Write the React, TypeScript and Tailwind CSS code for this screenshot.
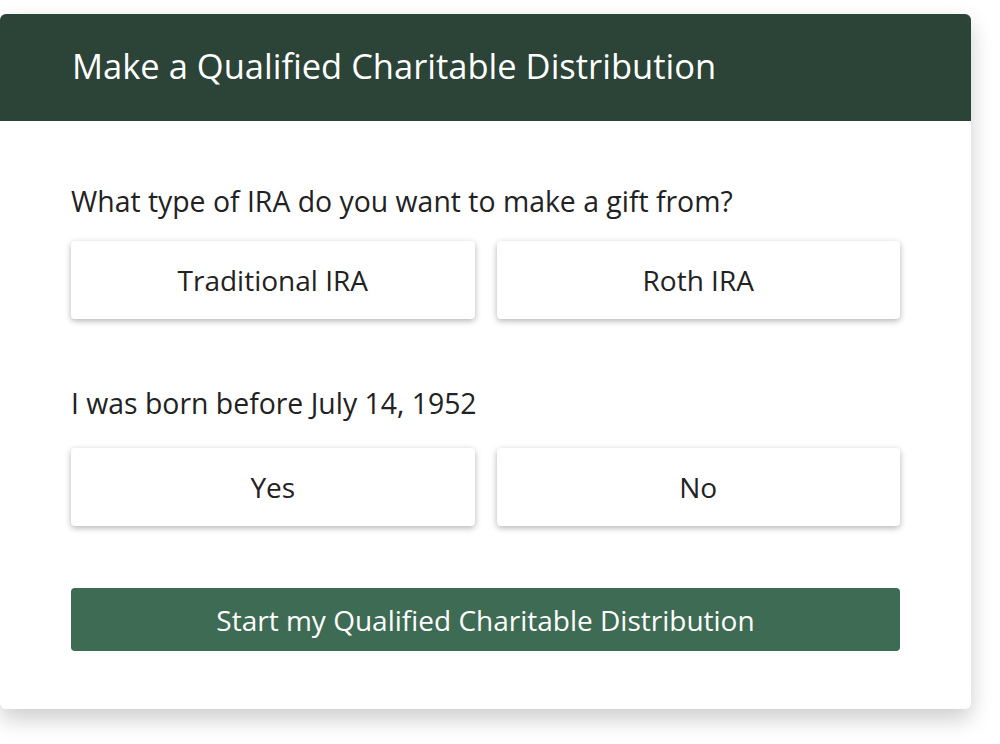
export default function App() {
  const font = { fontFamily: '"Open Sans", Lato, sans-serif' }
  return (
    <div className="min-h-[744px] w-[1000px] bg-white pt-[14px]" style={font}>
      <div className="w-[971px] overflow-hidden rounded-md bg-white shadow-[0_10px_22px_rgba(0,0,0,0.2)]">
        <div className="flex h-[107px] items-center bg-[#2c4337] px-[72px] pb-[4px]">
          <h1 className="text-[34.5px] font-normal text-white">Make a Qualified Charitable Distribution</h1>
        </div>
        <div className="px-[71px] pb-[58px] pt-[62px] text-[#222]">
          <p className="text-[28.4px] leading-[36px]">What type of IRA do you want to make a gift from?</p>
          <div className="mt-[22px] grid grid-cols-2 gap-[22px]">
            <button className="h-[78px] rounded bg-white text-[28px] text-[#222] shadow-[0_2px_6px_rgba(0,0,0,0.3)]">Traditional IRA</button>
            <button className="h-[78px] rounded bg-white text-[28px] text-[#222] shadow-[0_2px_6px_rgba(0,0,0,0.3)]">Roth IRA</button>
          </div>
          <p className="mt-[66px] text-[28.4px] leading-[36px]">I was born before July 14, 1952</p>
          <div className="mt-[27px] grid grid-cols-2 gap-[22px]">
            <button className="h-[78px] rounded bg-white text-[28px] text-[#222] shadow-[0_2px_6px_rgba(0,0,0,0.3)]">Yes</button>
            <button className="h-[78px] rounded bg-white text-[28px] text-[#222] shadow-[0_2px_6px_rgba(0,0,0,0.3)]">No</button>
          </div>
          <button className="mt-[62px] flex h-[63px] w-full items-center justify-center rounded bg-[#3e6b53] text-[28px] text-white">
            Start my Qualified Charitable Distribution
          </button>
        </div>
      </div>
    </div>
  )
}
